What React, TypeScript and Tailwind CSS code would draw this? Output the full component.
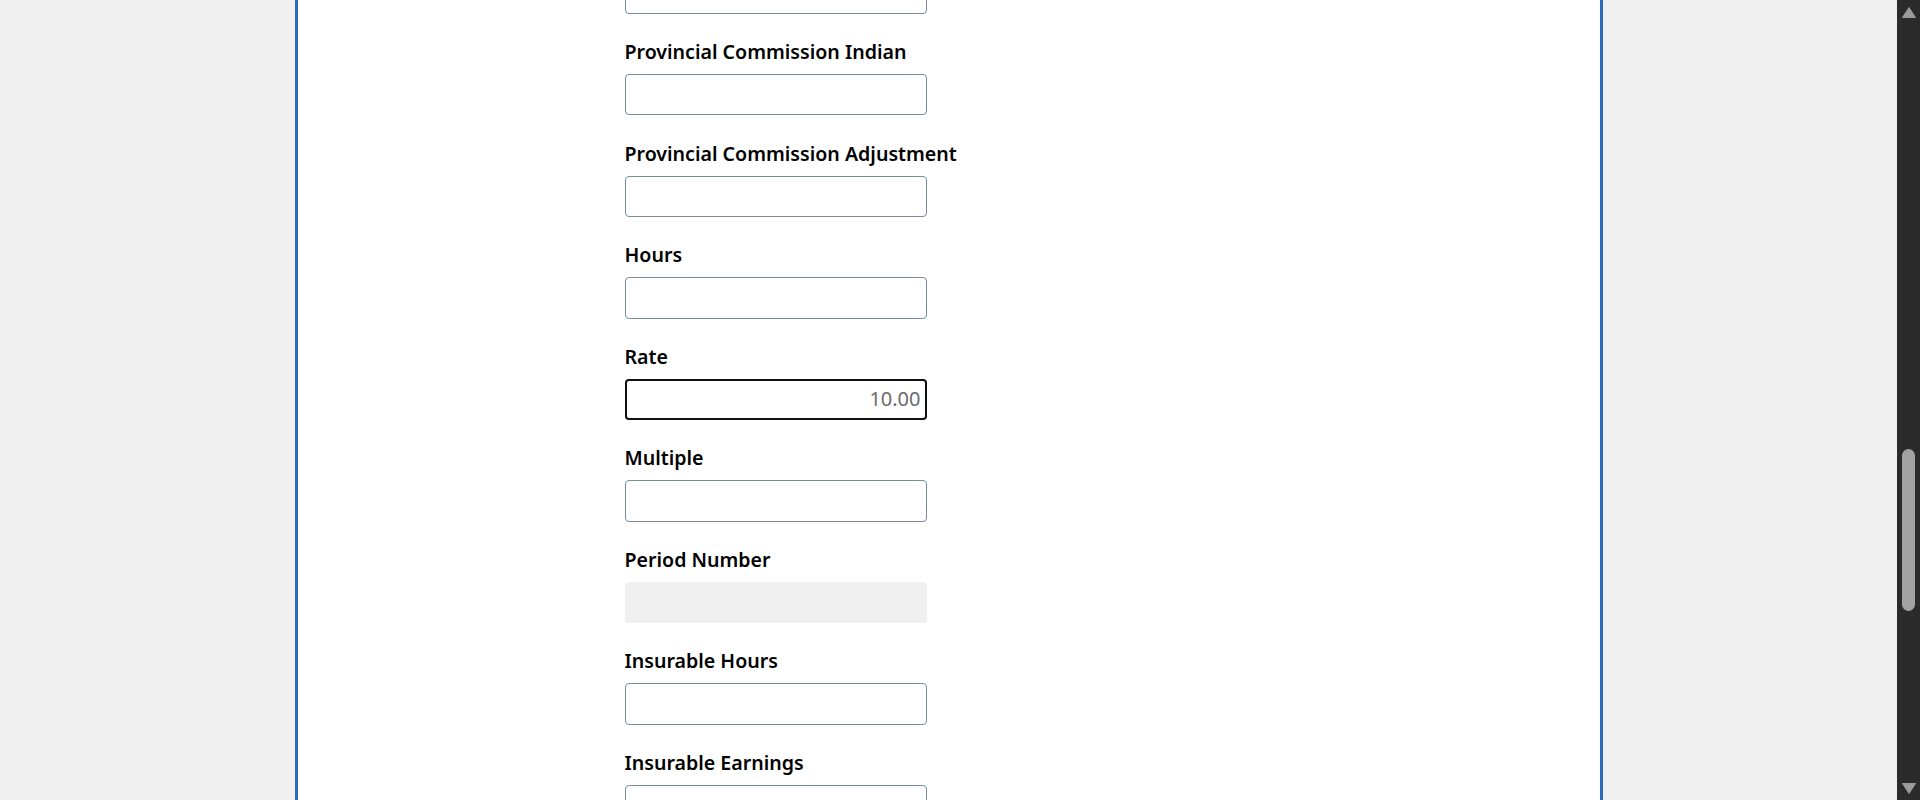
const fields = [
  { label: 'Provincial Commission Indian' },
  { label: 'Provincial Commission Adjustment' },
  { label: 'Hours' },
  { label: 'Rate', value: '10.00', focused: true },
  { label: 'Multiple' },
  { label: 'Period Number', disabled: true },
  { label: 'Insurable Hours' },
  { label: 'Insurable Earnings' },
];

function Field({ label, value, focused, disabled }: { label: string; value?: string; focused?: boolean; disabled?: boolean }) {
  let boxClass = 'h-[41.5px] w-[302px] rounded-[4px] border border-[#788a9e] bg-white';
  if (focused) boxClass = 'h-[41.5px] w-[302px] rounded-[4px] border-2 border-[#111111] bg-white';
  if (disabled) boxClass = 'h-[41.5px] w-[302px] rounded-[4px] bg-[#efeff0]';

  return (
    <div className="flex flex-col">
      <label className="text-[19.6px] leading-[26px] font-semibold text-black whitespace-nowrap">{label}</label>
      <div className={'mt-[9px] flex items-center justify-end pr-[4px] ' + boxClass}>
        {value && <span className="text-[20px] text-[#6b6b6b]">{value}</span>}
      </div>
    </div>
  );
}

export default function App() {
  return (
    <div className="flex h-[800px] w-full overflow-hidden bg-[#f0f0f0] font-['Noto_Sans',sans-serif]">
      <main className="flex flex-1 justify-center">
        <div className="w-[1308px] border-x-[3px] border-[#2f6bbd] bg-white pl-[327px]">
          <div className="mt-[-27.7px] flex flex-col gap-[25.1px]">
            <div className="h-[41.5px] w-[302px] rounded-[4px] border border-[#788a9e] bg-white" />
            {fields.map((f) => (
              <Field key={f.label} {...f} />
            ))}
          </div>
        </div>
      </main>

      {/* scrollbar */}
      <div className="flex w-[23px] flex-col items-center bg-[#2b2b2b] pt-[7px]">
        <svg width="14" height="11" viewBox="0 0 14 11">
          <path d="M7 0.5 L13.5 10.5 L0.5 10.5 Z" fill="#9b9b9b" strokeLinejoin="round" stroke="#9b9b9b" />
        </svg>
        <div className="mt-[431px] h-[162px] w-[13px] rounded-full bg-[#a3a3a3]" />
        <svg className="mt-auto mb-[6px]" width="14" height="11" viewBox="0 0 14 11">
          <path d="M0.5 0.5 L13.5 0.5 L7 10.5 Z" fill="#9b9b9b" strokeLinejoin="round" stroke="#9b9b9b" />
        </svg>
      </div>
    </div>
  );
}
